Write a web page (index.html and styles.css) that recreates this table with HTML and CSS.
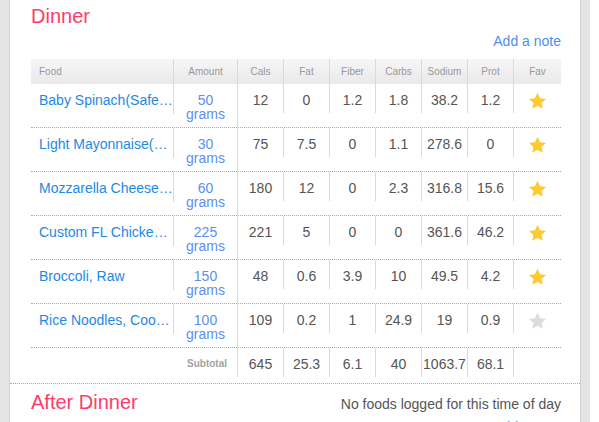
FILE: index.html
```html
<!DOCTYPE html>
<html>
<head>
<meta charset="utf-8">
<link rel="stylesheet" href="styles.css">
</head>
<body>
<div class="rail-left"></div>
<main class="panel">
  <section class="meal meal-first">
    <div class="meal-head">
      <h2 class="meal-title">Dinner</h2>
    </div>
    <div class="note-line"><a class="note-link" href="#">Add a note</a></div>
    <div class="food-table">
      <div class="trow thead">
        <div class="c c-food">Food</div>
        <div class="c c-amt">Amount</div>
        <div class="c c-num">Cals</div>
        <div class="c c-num">Fat</div>
        <div class="c c-num">Fiber</div>
        <div class="c c-num">Carbs</div>
        <div class="c c-num">Sodium</div>
        <div class="c c-num">Prot</div>
        <div class="c c-fav">Fav</div>
      </div>

      <div class="trow tbody">
        <div class="c c-food"><a href="#">Baby Spinach(Safeway)</a></div>
        <div class="c c-amt"><a href="#">50<br>grams</a></div>
        <div class="c c-num">12</div>
        <div class="c c-num">0</div>
        <div class="c c-num">1.2</div>
        <div class="c c-num">1.8</div>
        <div class="c c-num">38.2</div>
        <div class="c c-num">1.2</div>
        <div class="c c-fav"><svg class="star on" viewBox="0 0 24 24"><path d="M12 2l2.9 6.26 6.86.74-5.13 4.63 1.45 6.77L12 16.9l-6.08 3.5 1.45-6.77L2.24 9l6.86-.74z"/></svg></div>
      </div>

      <div class="trow tbody">
        <div class="c c-food"><a href="#">Light Mayonnaise(Best Foods)</a></div>
        <div class="c c-amt"><a href="#">30<br>grams</a></div>
        <div class="c c-num">75</div>
        <div class="c c-num">7.5</div>
        <div class="c c-num">0</div>
        <div class="c c-num">1.1</div>
        <div class="c c-num">278.6</div>
        <div class="c c-num">0</div>
        <div class="c c-fav"><svg class="star on" viewBox="0 0 24 24"><path d="M12 2l2.9 6.26 6.86.74-5.13 4.63 1.45 6.77L12 16.9l-6.08 3.5 1.45-6.77L2.24 9l6.86-.74z"/></svg></div>
      </div>

      <div class="trow tbody">
        <div class="c c-food"><a href="#">Mozzarella Cheese, Part Skim</a></div>
        <div class="c c-amt"><a href="#">60<br>grams</a></div>
        <div class="c c-num">180</div>
        <div class="c c-num">12</div>
        <div class="c c-num">0</div>
        <div class="c c-num">2.3</div>
        <div class="c c-num">316.8</div>
        <div class="c c-num">15.6</div>
        <div class="c c-fav"><svg class="star on" viewBox="0 0 24 24"><path d="M12 2l2.9 6.26 6.86.74-5.13 4.63 1.45 6.77L12 16.9l-6.08 3.5 1.45-6.77L2.24 9l6.86-.74z"/></svg></div>
      </div>

      <div class="trow tbody">
        <div class="c c-food"><a href="#">Custom FL Chicken Breast</a></div>
        <div class="c c-amt"><a href="#">225<br>grams</a></div>
        <div class="c c-num">221</div>
        <div class="c c-num">5</div>
        <div class="c c-num">0</div>
        <div class="c c-num">0</div>
        <div class="c c-num">361.6</div>
        <div class="c c-num">46.2</div>
        <div class="c c-fav"><svg class="star on" viewBox="0 0 24 24"><path d="M12 2l2.9 6.26 6.86.74-5.13 4.63 1.45 6.77L12 16.9l-6.08 3.5 1.45-6.77L2.24 9l6.86-.74z"/></svg></div>
      </div>

      <div class="trow tbody">
        <div class="c c-food"><a href="#">Broccoli, Raw</a></div>
        <div class="c c-amt"><a href="#">150<br>grams</a></div>
        <div class="c c-num">48</div>
        <div class="c c-num">0.6</div>
        <div class="c c-num">3.9</div>
        <div class="c c-num">10</div>
        <div class="c c-num">49.5</div>
        <div class="c c-num">4.2</div>
        <div class="c c-fav"><svg class="star on" viewBox="0 0 24 24"><path d="M12 2l2.9 6.26 6.86.74-5.13 4.63 1.45 6.77L12 16.9l-6.08 3.5 1.45-6.77L2.24 9l6.86-.74z"/></svg></div>
      </div>

      <div class="trow tbody">
        <div class="c c-food"><a href="#">Rice Noodles, Cooked</a></div>
        <div class="c c-amt"><a href="#">100<br>grams</a></div>
        <div class="c c-num">109</div>
        <div class="c c-num">0.2</div>
        <div class="c c-num">1</div>
        <div class="c c-num">24.9</div>
        <div class="c c-num">19</div>
        <div class="c c-num">0.9</div>
        <div class="c c-fav"><svg class="star off" viewBox="0 0 24 24"><path d="M12 2l2.9 6.26 6.86.74-5.13 4.63 1.45 6.77L12 16.9l-6.08 3.5 1.45-6.77L2.24 9l6.86-.74z"/></svg></div>
      </div>

      <div class="trow tfoot">
        <div class="c c-sub">Subtotal</div>
        <div class="c c-num">645</div>
        <div class="c c-num">25.3</div>
        <div class="c c-num">6.1</div>
        <div class="c c-num">40</div>
        <div class="c c-num">1063.7</div>
        <div class="c c-num">68.1</div>
        <div class="c c-fav"></div>
      </div>
    </div>
  </section>

  <section class="meal">
    <div class="meal-head">
      <h2 class="meal-title">After Dinner</h2>
      <span class="empty-msg">No foods logged for this time of day</span>
    </div>
    <div class="note-line"><a class="note-link" href="#">Add a note</a></div>
  </section>
</main>
<div class="rail-right"></div>
</body>
</html>
```

FILE: styles.css
```css
html, body {
  margin: 0;
  padding: 0;
}
body {
  display: flex;
  height: 422px;
  overflow: hidden;
  background: #fff;
  font-family: "Liberation Sans", Arial, sans-serif;
  font-size: 14px;
  color: #555;
}
.rail-left {
  width: 9px;
  flex: none;
  background: #e4e4e4;
  border-right: 1px solid #d6d6d6;
}
.panel {
  width: 570px;
  flex: none;
  background: #fff;
}
.rail-right {
  width: 9px;
  flex: none;
  background: #e4e4e4;
  border-left: 1px solid #cfcfcf;
}
.meal {
  padding: 7px 19px 6px 21px;
  border-bottom: 1px dotted #a8a8a8;
}
.meal-first {
  padding-top: 5px;
}
.meal-head {
  display: flex;
  justify-content: space-between;
  align-items: baseline;
}
.meal-title {
  margin: 0;
  font-size: 20px;
  line-height: 23px;
  font-weight: normal;
  color: #ff3b68;
}
.empty-msg {
  font-size: 14px;
  line-height: 16px;
  color: #555;
}
.note-line {
  margin-top: 5px;
  text-align: right;
  line-height: 16px;
}
.note-link {
  color: #4d8ff0;
  text-decoration: none;
}
.food-table {
  margin-top: 10px;
  width: 530px;
}
.trow {
  display: flex;
  align-items: flex-start;
}
.c {
  box-sizing: border-box;
  border-right: 1px solid #dadada;
  flex: none;
}
.c-food { width: 143px; }
.c-amt { width: 64px; text-align: center; }
.c-num { width: 46px; text-align: center; }
.c-fav { width: 47px; text-align: center; border-right: 0; }
.c-sub { width: 207px; }

.thead {
  height: 25px;
  background: linear-gradient(#f6f6f6, #e9e9e9);
  font-size: 10px;
  color: #999;
  align-items: stretch;
}
.thead .c {
  line-height: 25px;
}
.thead .c-food {
  padding-left: 8px;
}

.tbody {
  border-bottom: 1px dotted #a8a8a8;
}
.tbody .c {
  padding: 9px 0 6px;
  line-height: 14px;
}
.tbody .c-food {
  padding: 9px 0 7px 8px;
  white-space: nowrap;
  overflow: hidden;
  text-overflow: ellipsis;
  color: #1e88e5;
}
.tbody .c-food a {
  color: #1e88e5;
  text-decoration: none;
}
.tbody .c-amt a {
  color: #5b8ff2;
  text-decoration: none;
}
.tbody .c-fav {
  padding: 7px 0 0;
}
.star {
  display: block;
  width: 21px;
  height: 21px;
  margin: 0 auto;
}
.star.on { fill: #ffca2c; }
.star.off { fill: #dcdcdc; }

.tfoot .c {
  padding: 9px 0 6px;
  line-height: 14px;
}
.tfoot .c-sub {
  text-align: right;
  padding-right: 10px;
  font-size: 10px;
  font-weight: bold;
  color: #a3a3a3;
}
.tfoot .c-fav {
  padding: 0;
}
```
